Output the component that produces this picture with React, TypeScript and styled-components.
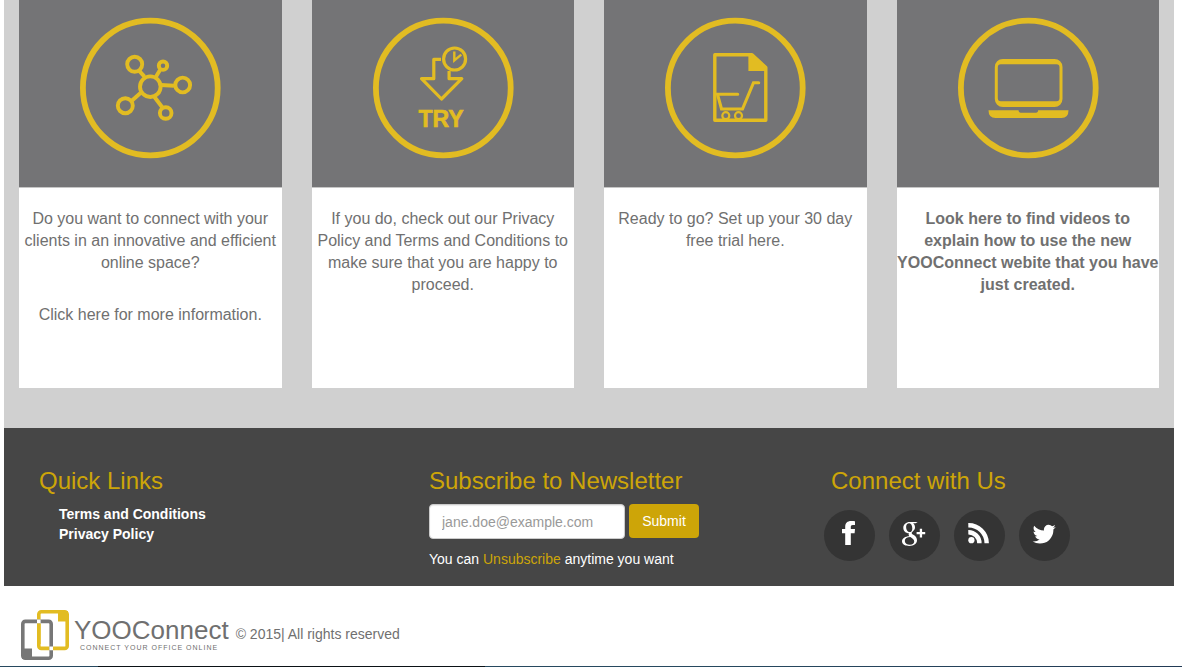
import React from "react";
import styled, { createGlobalStyle } from "styled-components";

const gold = "#e2bc22";
const grey = "#747476";

const GlobalStyle = createGlobalStyle`
  *, *::before, *::after { box-sizing: border-box; }
  body {
    margin: 0;
    background: #fff;
    color: #707070;
    font-family: "Liberation Sans", Arial, sans-serif;
    font-size: 14px;
    line-height: 20px;
  }
  a { text-decoration: none; }
`;

const Page = styled.div`
  margin: 0 8px 0 4px;
`;

const Features = styled.main`
  display: grid;
  grid-template-columns: repeat(4, minmax(0, 1fr));
  gap: 30px;
  padding: 0 15px 40px;
  background: #d0d0d0;
`;

const Card = styled.article`
  display: flex;
  flex-direction: column;
  background: #fff;
`;

const CardArt = styled.div`
  display: flex;
  justify-content: center;
  height: 188px;
  padding-top: 17px;
  background: ${grey};
  border-bottom: 1px solid #c6c6c6;
`;

const CardBody = styled.div<{ $strong?: boolean }>`
  display: flex;
  flex-direction: column;
  gap: 30px;
  min-height: 200px;
  padding-top: 20px;
  font-size: 16px;
  line-height: 22px;
  font-weight: ${(p) => (p.$strong ? "bold" : "normal")};
  text-align: center;
`;

const Paragraph = styled.p`
  margin: 0;
`;

const Footer = styled.footer`
  display: grid;
  grid-template-columns: repeat(3, minmax(0, 1fr));
  min-height: 158px;
  padding-top: 38px;
  background: #464646;
  color: #fff;
`;

const FooterColumn = styled.section`
  padding: 0 0 16px 35px;
`;

const Heading = styled.h3<{ $indent?: boolean }>`
  margin: 0;
  padding-left: ${(p) => (p.$indent ? "12px" : "0")};
  color: #cda508;
  font-size: 24px;
  line-height: 30px;
  font-weight: normal;
`;

const LinkList = styled.ul`
  margin: 8px 0 0;
  padding: 0 0 0 20px;
  list-style: none;
`;

const FooterLink = styled.a`
  color: #fff;
  font-weight: bold;
`;

const Form = styled.form`
  display: flex;
  gap: 4px;
  margin: 8px 0 10px;
`;

const EmailInput = styled.input`
  width: 196px;
  height: 35px;
  padding: 6px 12px;
  border: 1px solid #ccc;
  border-radius: 4px;
  background: #fff;
  color: #555;
  font: inherit;
  box-shadow: inset 0 1px 1px rgba(0, 0, 0, 0.08);
  &::placeholder {
    color: #999;
    opacity: 1;
  }
`;

const SubmitButton = styled.button`
  width: 70px;
  height: 34px;
  padding: 0;
  border: 0;
  border-radius: 4px;
  background: #cda508;
  color: #fff;
  font: inherit;
`;

const GoldLink = styled.a`
  color: #cda508;
`;

const SocialRow = styled.nav`
  display: flex;
  gap: 14px;
  margin-top: 14px;
  padding-left: 5px;
`;

const SocialLink = styled.a`
  display: flex;
  width: 51px;
  height: 51px;
  border-radius: 50%;
  background: #343434;
`;

const Bottom = styled.div`
  display: flex;
  align-items: center;
  gap: 7px;
  height: 80px;
  padding: 18px 17px 0;
`;

const Brand = styled.a`
  display: flex;
  gap: 5px;
  color: #707070;
`;

const BrandText = styled.span`
  display: flex;
  flex-direction: column;
  padding-top: 6px;
`;

const BrandName = styled.span`
  font-size: 26px;
  line-height: 28px;
`;

const Tagline = styled.span`
  padding-left: 6px;
  font-size: 7px;
  line-height: 8px;
  letter-spacing: 1px;
  white-space: nowrap;
`;

const Copyright = styled.p`
  margin: 0;
  padding-bottom: 2px;
`;

const BottomEdge = styled.div`
  height: 1px;
  background: linear-gradient(
    to right,
    #27495f 0 98px,
    #0b1216 98px 485px,
    #27495f 485px 700px,
    #223a55
  );
`;

const Badge = ({ children }: { children: React.ReactNode }) => (
  <svg width="142" height="142" viewBox="0 0 142 142" fill="none" stroke={gold} aria-hidden="true">
    <circle cx="71.3" cy="71" r="67.4" strokeWidth="5.8" />
    {children}
  </svg>
);

const NetworkArt = () => (
  <Badge>
    <g strokeWidth="3.9">
      <circle cx="71.3" cy="69.7" r="10.3" />
      <circle cx="55.7" cy="47.3" r="7.5" />
      <circle cx="84" cy="48.7" r="4.2" />
      <circle cx="103.7" cy="68" r="7.4" />
      <circle cx="46.3" cy="88.7" r="7.5" />
      <circle cx="86.7" cy="96" r="5.8" />
      <path d="M60 53.6 65.5 59.6M76.5 60.5 81 53M82 68 95 68.7M61.5 76 52.5 84M75.5 80 83 90" />
    </g>
  </Badge>
);

const TryArt = () => (
  <Badge>
    <g strokeWidth="3.2">
      <circle cx="82.6" cy="42" r="11" />
      <path d="M82.3 34.5V43.5L89.3 37.6" strokeWidth="2.4" />
      <path
        d="M69 42.3H61.8V61.7H49.5L69.5 82 89.8 61.7H77.1V54"
        strokeLinejoin="round"
      />
    </g>
    <text
      x="69"
      y="110"
      textAnchor="middle"
      fill={gold}
      strokeWidth="0.6"
      fontSize="23"
      fontWeight="bold"
    >
      TRY
    </text>
  </Badge>
);

const TrialArt = () => (
  <Badge>
    <path
      d="M50.8 37.7H88L101.8 50.5V103.3H50.8Z"
      strokeWidth="3.4"
      strokeLinejoin="round"
    />
    <path d="M84.4 37V54H103V50L88.8 37Z" fill={gold} stroke="none" />
    <path
      d="M73.7 77.3H53.5L57.5 92H78.5L89.5 65.7H94.7"
      strokeWidth="3.1"
      strokeLinecap="round"
    />
    <circle cx="61.8" cy="98.7" r="3.5" strokeWidth="2.2" />
    <circle cx="74.5" cy="98.7" r="3.5" strokeWidth="2.2" />
  </Badge>
);

const LaptopArt = () => (
  <Badge>
    <path
      fill={gold}
      stroke="none"
      fillRule="evenodd"
      d="M45.8 42H97.5a8 8 0 0 1 8 8V82a8 8 0 0 1-8 8H45.8a8 8 0 0 1-8-8V50a8 8 0 0 1 8-8ZM43.8 47.3a3 3 0 0 0-3 3V81.3a3 3 0 0 0 3 3H99.5a3 3 0 0 0 3-3V50.3a3 3 0 0 0-3-3Z"
    />
    <path
      fill={gold}
      stroke="none"
      d="M31.5 93.3H61.5q0 2.4 2 2.4H79.2q2 0 2-2.4H111.5q0 7.7-7 7.7H38.5q-7 0-7-7.7Z"
    />
  </Badge>
);

const FacebookIcon = () => (
  <svg width="51" height="51" viewBox="0 0 51 51" fill="#fff" aria-hidden="true">
    <path d="M31 11.2V15.1H28.9C27.2 15.1 26.8 16 26.8 17V19H31L30.6 23.2H26.8V35H21.2V23.2H18V19H21.2V16.9C21.2 13.1 23.4 11 27.1 11 28.9 11 30.4 11.1 31 11.2Z" />
  </svg>
);

const GooglePlusIcon = () => (
  <svg width="51" height="51" viewBox="0 0 51 51" fill="#fff" aria-hidden="true">
    <path
      fillRule="evenodd"
      d="M28.7 12H20.8C17 12 14.3 14.5 14.3 17.8 14.3 21.1 16.8 23.3 20 23.3 19.3 24.5 19.6 25.4 20.4 26.2 16.2 26.3 13 28.2 13 31.3 13 34.2 16 36 20.2 36 25 36 28 33.6 28 30.3 28 28 26.8 26.6 24.8 25.1 23.2 23.9 22.7 23.5 22.7 22.9 22.7 22.3 23.2 21.9 24 21.2 25.3 20.2 26 19 26 17.3 26 15.5 25.3 14.2 24.1 13.3H26.6ZM20.3 13.3C22.1 13.3 23.3 15.7 23.3 18.4 23.3 20.8 22.3 22.1 20.6 22.1 18.5 22.1 17.1 19.8 17.1 17 17.1 14.8 18.3 13.3 20.3 13.3ZM21.4 27.1C24 28.9 25.2 29.9 25.2 31.6 25.2 33.5 23.7 34.7 21 34.7 17.9 34.7 15.8 33.2 15.8 30.9 15.8 28.4 18 27.1 21.4 27.1Z"
    />
    <path d="M30.8 18.8H33.1V22H36.2V24.2H33.1V27.4H30.8V24.2H27.6V22H30.8Z" />
  </svg>
);

const RssIcon = () => (
  <svg width="51" height="51" viewBox="0 0 51 51" fill="none" stroke="#fff" aria-hidden="true">
    <circle cx="17.4" cy="30.2" r="3.1" fill="#fff" stroke="none" />
    <path d="M14.3 22.2A10.9 10.9 0 0 1 25.4 33.2M14.3 15.2A18.2 18.2 0 0 1 32.7 33.2" strokeWidth="4.4" />
  </svg>
);

const TwitterIcon = () => (
  <svg width="51" height="51" viewBox="0 0 51 51" fill="#fff" aria-hidden="true">
    <path
      transform="translate(12 11) scale(.0147)"
      d="M1684 408q-67 98-162 167 1 14 1 42 0 130-38 259.500t-115.500 248.500-184.500 210.500-258 146-323 54.500q-271 0-496-145 35 4 78 4 225 0 401-138-105-2-188-64.500t-114-159.500q33 5 61 5 43 0 85-11-112-23-185.500-111.500t-73.500-205.500v-4q68 38 146 41-66-44-105-115t-39-154q0-88 44-163 121 149 294.500 238.500t371.500 99.500q-8-38-8-74 0-134 94.500-228.500t228.500-94.500q140 0 236 102 109-21 205-78-37 115-142 178 93-10 186-50z"
    />
  </svg>
);

const BrandMark = () => (
  <svg width="48" height="50" viewBox="0 0 48 50" fill="none" aria-hidden="true">
    <rect x="17.8" y="1.8" width="28.4" height="36.6" rx="2.5" stroke={gold} strokeWidth="3.6" />
    <path d="M37 1H47V11.5H37Z" fill={gold} />
    <rect x="1.8" y="11.4" width="28.4" height="36.8" rx="2.5" stroke="#777" strokeWidth="3.6" />
    <path d="M1 38.5H11V49H1Z" fill="#777" />
    <path d="M17.8 14V34" stroke={gold} strokeWidth="3.6" />
    <path d="M16 9.6H19.6V13.2H16ZM28.4 36.6H32V40.2H28.4Z" fill="#fff" />
  </svg>
);

const socials = [
  { label: "Facebook", Icon: FacebookIcon },
  { label: "Google Plus", Icon: GooglePlusIcon },
  { label: "RSS", Icon: RssIcon },
  { label: "Twitter", Icon: TwitterIcon },
];

const cards = [
  {
    Art: NetworkArt,
    text: [
      "Do you want to connect with your clients in an innovative and efficient online space?",
      "Click here for more information.",
    ],
  },
  {
    Art: TryArt,
    text: [
      "If you do, check out our Privacy Policy and Terms and Conditions to make sure that you are happy to proceed.",
    ],
  },
  { Art: TrialArt, text: ["Ready to go? Set up your 30 day free trial here."] },
  {
    Art: LaptopArt,
    strong: true,
    text: [
      "Look here to find videos to explain how to use the new YOOConnect webite that you have just created.",
    ],
  },
];

export default function App() {
  return (
    <>
      <GlobalStyle />
      <Page>
        <Features>
          {cards.map(({ Art, text, strong }, i) => (
            <Card key={i}>
              <CardArt>
                <Art />
              </CardArt>
              <CardBody $strong={strong}>
                {text.map((t) => (
                  <Paragraph key={t}>{t}</Paragraph>
                ))}
              </CardBody>
            </Card>
          ))}
        </Features>
        <Footer>
          <FooterColumn>
            <Heading>Quick Links</Heading>
            <LinkList>
              <li>
                <FooterLink href="#terms">Terms and Conditions</FooterLink>
              </li>
              <li>
                <FooterLink href="#privacy">Privacy Policy</FooterLink>
              </li>
            </LinkList>
          </FooterColumn>
          <FooterColumn>
            <Heading>Subscribe to Newsletter</Heading>
            <Form onSubmit={(e) => e.preventDefault()}>
              <EmailInput type="email" aria-label="Email address" placeholder="jane.doe@example.com" />
              <SubmitButton type="submit">Submit</SubmitButton>
            </Form>
            <Paragraph>
              You can <GoldLink href="#unsubscribe">Unsubscribe</GoldLink> anytime you want
            </Paragraph>
          </FooterColumn>
          <FooterColumn>
            <Heading $indent>Connect with Us</Heading>
            <SocialRow aria-label="Social media">
              {socials.map(({ label, Icon }) => (
                <SocialLink key={label} href={`#${label}`} aria-label={label}>
                  <Icon />
                </SocialLink>
              ))}
            </SocialRow>
          </FooterColumn>
        </Footer>
        <Bottom>
          <Brand href="#home">
            <BrandMark />
            <BrandText>
              <BrandName>YOOConnect</BrandName>
              <Tagline>CONNECT YOUR OFFICE ONLINE</Tagline>
            </BrandText>
          </Brand>
          <Copyright>© 2015| All rights reserved</Copyright>
        </Bottom>
      </Page>
      <BottomEdge />
    </>
  );
}
